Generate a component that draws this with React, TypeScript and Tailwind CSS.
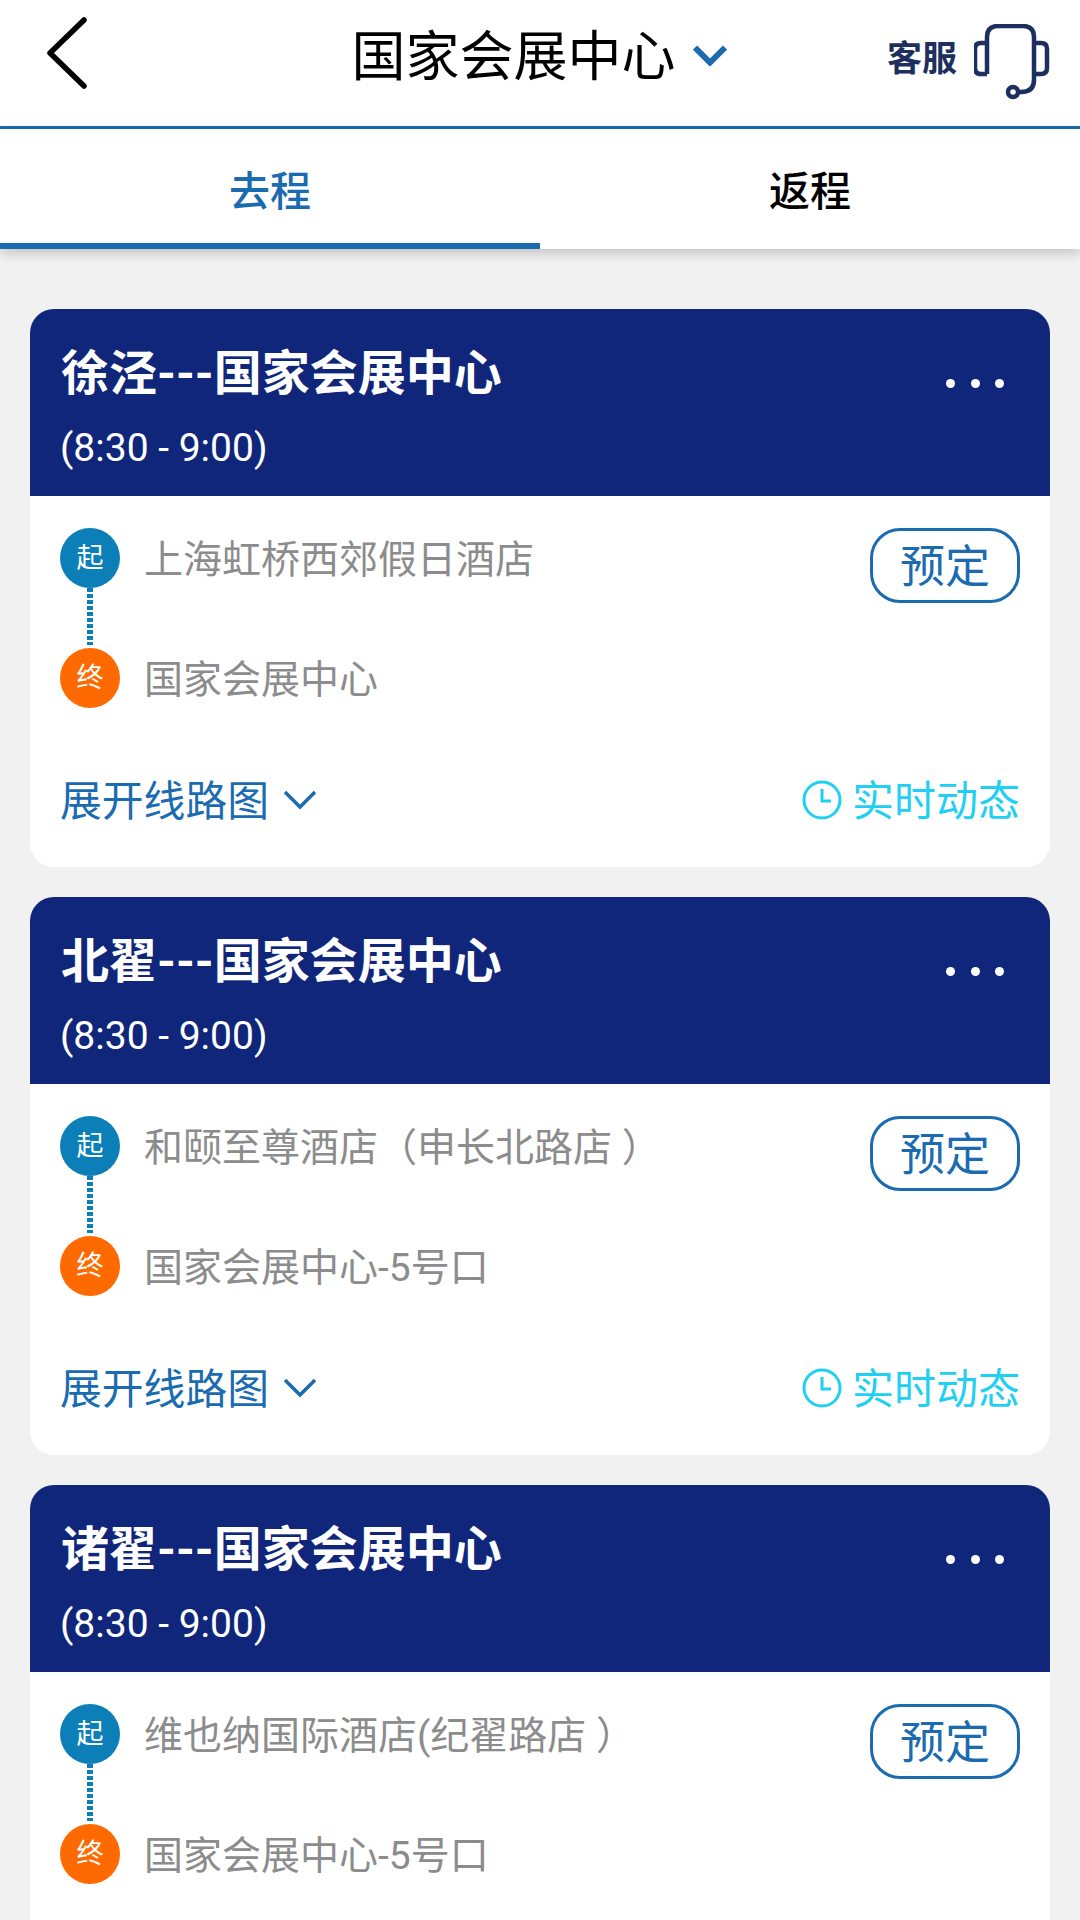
const FONT = "font-['Roboto','Noto_Sans_CJK_SC',sans-serif]";

const routes = [
  { title: "徐泾---国家会展中心", from: "上海虹桥西郊假日酒店", to: "国家会展中心" },
  { title: "北翟---国家会展中心", from: "和颐至尊酒店（申长北路店 ）", to: "国家会展中心-5号口" },
  { title: "诸翟---国家会展中心", from: "维也纳国际酒店(纪翟路店 ）", to: "国家会展中心-5号口" },
];

function Chevron({ className, width = 3.5 }: { className: string; width?: number }) {
  return (
    <svg viewBox="0 0 34 20" fill="none" className={className}>
      <path d="M2 2 L17 17 L32 2" stroke="currentColor" strokeWidth={width} />
    </svg>
  );
}

function Headset() {
  return (
    <svg viewBox="0 0 76 76" fill="none" className="w-[76px] h-[76px]" stroke="#1c2f5e" strokeWidth="4.5">
      <path d="M13 50 V13 Q13 2 24 2 H49 Q60 2 60 13 V56 Q60 68 47 68 H44" />
      <path d="M13 19 H7 Q1 19 1 25 V44 Q1 50 7 50 H13" />
      <path d="M60 19 H67 Q73 19 73 25 V44 Q73 50 67 50 H60" />
      <circle cx="39" cy="68" r="5" />
    </svg>
  );
}

function Stop({ label, color, text }: { label: string; color: string; text: string }) {
  return (
    <div className="flex items-center h-[60px]">
      <div className={`w-[60px] h-[60px] rounded-full flex items-center justify-center text-white text-[27px] ${color}`}>
        {label}
      </div>
      <span className="ml-[24px] mt-[4px] text-[39px] leading-none text-[#8c8c8c] whitespace-pre">{text}</span>
    </div>
  );
}

function RouteCard({ title, from, to }: { title: string; from: string; to: string }) {
  return (
    <div className="rounded-[24px] overflow-hidden bg-white shrink-0 h-[558px]">
      <div className="h-[187px] bg-[#10267b] text-white pl-[31px] pr-[30px] pt-[39px] relative">
        <div className="text-[48px] leading-[52px] font-bold whitespace-nowrap">{title}</div>
        <div className="mt-[23px] -ml-[1px] text-[39px] leading-[50px]">(8:30 - 9:00)</div>
        <div className="absolute top-[70px] right-[46px] flex gap-[15.5px]">
          <span className="w-[9px] h-[9px] rounded-full bg-white" />
          <span className="w-[9px] h-[9px] rounded-full bg-white" />
          <span className="w-[9px] h-[9px] rounded-full bg-white" />
        </div>
      </div>
      <div className="px-[30px] pt-[32px]">
        <div className="flex justify-between">
          <div>
            <Stop label="起" color="bg-[#0d7fb8]" text={from} />
            <div className="ml-[27px] h-[57px] mb-[3px] w-[6px] bg-[repeating-linear-gradient(to_bottom,#0d7fb8_0,#0d7fb8_4px,transparent_4px,transparent_6px)]" />
            <Stop label="终" color="bg-[#ff6a00]" text={to} />
          </div>
          <div className="w-[150px] h-[75px] rounded-[30px] border-[3px] border-[#1a6bb0] text-[#1a6bb0] text-[45px] leading-none flex items-center justify-center pt-[4px]">
            预定
          </div>
        </div>
        <div className="flex justify-between items-center mt-[64px]">
          <div className="flex items-center text-[#1a6bb0] text-[41.8px] leading-[60px]">
            展开线路图
            <Chevron className="ml-[14px] w-[34px] h-[20px] -mt-[4px]" />
          </div>
          <div className="flex items-center text-[#1fd0f2] text-[42px] leading-[60px]">
            <svg viewBox="0 0 40 40" fill="none" stroke="currentColor" strokeWidth="3" className="w-[40px] h-[40px] -mt-[4px] mr-[10px]">
              <circle cx="20" cy="20" r="18" />
              <path d="M20 9 V21 H29" />
            </svg>
            实时动态
          </div>
        </div>
      </div>
    </div>
  );
}

export default function App() {
  return (
    <div className={`w-[1080px] h-[1920px] overflow-hidden bg-[#f1f1f1] flex flex-col ${FONT}`}>
      <header className="h-[129px] shrink-0 bg-white border-b-[3px] border-[#1a6bb0] relative flex items-center justify-center">
        <svg viewBox="0 0 44 76" fill="none" className="absolute left-[45px] top-[15px] w-[44px] h-[76px]">
          <path d="M39 5 L5 38 L39 71" stroke="#000" strokeWidth="5.5" strokeLinecap="round" strokeLinejoin="round" />
        </svg>
        <div className="flex items-center -mt-[10px] pr-[2px]">
          <span className="text-[54px] leading-none text-black">国家会展中心</span>
          <Chevron className="ml-[17px] w-[34px] h-[21px] -mt-[6px] text-[#1a6bb0]" width={6} />
        </div>
        <div className="absolute left-[887px] top-[24px] flex items-center">
          <span className="text-[35px] font-bold text-[#1c2f5e] -mt-[4px] mr-[17px]">客服</span>
          <Headset />
        </div>
      </header>
      <nav className="h-[120px] shrink-0 bg-white flex shadow-[0_4px_12px_rgba(0,0,0,0.2)] relative z-10 text-[41px] font-medium">
        <div className="w-1/2 flex items-center justify-center pt-[14px] text-[#1a6bb0] border-b-[6px] border-[#1a6bb0]">去程</div>
        <div className="w-1/2 flex items-center justify-center pt-[14px] text-black border-b-[6px] border-transparent">返程</div>
      </nav>
      <main className="px-[30px] pt-[60px] flex flex-col gap-[30px]">
        {routes.map((r) => (
          <RouteCard key={r.title} {...r} />
        ))}
      </main>
    </div>
  );
}
